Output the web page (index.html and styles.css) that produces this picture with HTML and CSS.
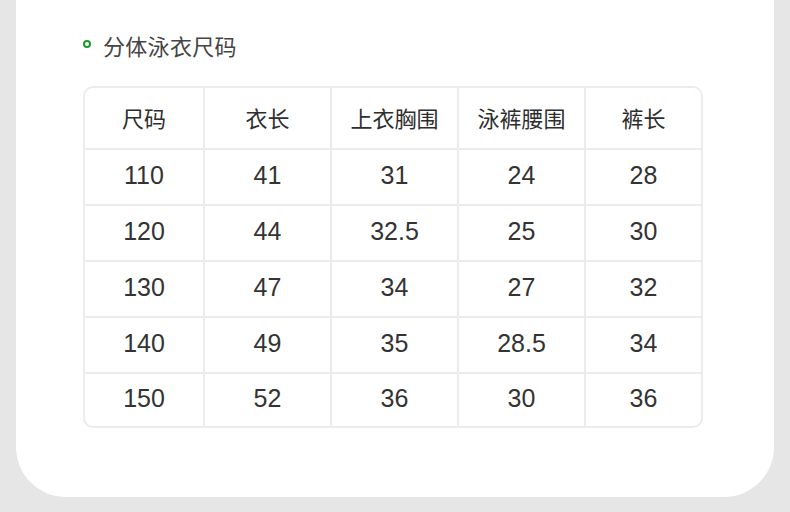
FILE: index.html
```html
<!DOCTYPE html>
<html lang="zh">
<head>
<meta charset="utf-8">
<link rel="stylesheet" href="styles.css">
</head>
<body>
<div class="card">
  <div class="title"><span class="dot"></span><span class="title-text">分体泳衣尺码</span></div>
  <div class="table">
    <div class="cell head">尺码</div><div class="cell head">衣长</div><div class="cell head">上衣胸围</div><div class="cell head">泳裤腰围</div><div class="cell head">裤长</div>
    <div class="cell">110</div><div class="cell">41</div><div class="cell">31</div><div class="cell">24</div><div class="cell">28</div>
    <div class="cell">120</div><div class="cell">44</div><div class="cell">32.5</div><div class="cell">25</div><div class="cell">30</div>
    <div class="cell">130</div><div class="cell">47</div><div class="cell">34</div><div class="cell">27</div><div class="cell">32</div>
    <div class="cell">140</div><div class="cell">49</div><div class="cell">35</div><div class="cell">28.5</div><div class="cell">34</div>
    <div class="cell">150</div><div class="cell">52</div><div class="cell">36</div><div class="cell">30</div><div class="cell">36</div>
  </div>
</div>
</body>
</html>
```
FILE: styles.css
```css
html, body {
  margin: 0;
  padding: 0;
  background: #e6e6e6;
  width: 790px;
  height: 512px;
  overflow: hidden;
  font-family: "Liberation Sans", "Noto Sans CJK SC", sans-serif;
}
.card {
  margin: 0 16px;
  height: 497px;
  background: #ffffff;
  border-radius: 0 0 50px 50px;
  padding-top: 31px;
  box-sizing: border-box;
}
.title {
  display: flex;
  align-items: center;
  height: 28px;
  padding-left: 67px;
}
.dot {
  width: 4px;
  height: 4px;
  border: 2px solid #1a9a2e;
  border-radius: 50%;
  margin-right: 12px;
  margin-top: -3px;
}
.title-text {
  font-family: "Noto Sans CJK SC", sans-serif;
  font-size: 22px;
  color: #454545;
  letter-spacing: 0.3px;
}
.table {
  margin: 27px 0 0 67px;
  width: 620px;
  box-sizing: border-box;
  border: 2px solid #ececec;
  border-radius: 10px;
  overflow: hidden;
  background: #ececec;
  display: grid;
  grid-template-columns: 118px 125px 125px 125px 115px;
  grid-template-rows: 60px repeat(4, 54px) 52px;
  gap: 2px;
}
.cell {
  background: #ffffff;
  display: flex;
  align-items: center;
  justify-content: center;
  font-size: 25px;
  color: #333333;
  padding-bottom: 3px;
  box-sizing: border-box;
}
.head {
  font-family: "Noto Sans CJK SC", sans-serif;
  font-size: 22px;
  color: #2e2e2e;
  padding-bottom: 3px;
}
```
